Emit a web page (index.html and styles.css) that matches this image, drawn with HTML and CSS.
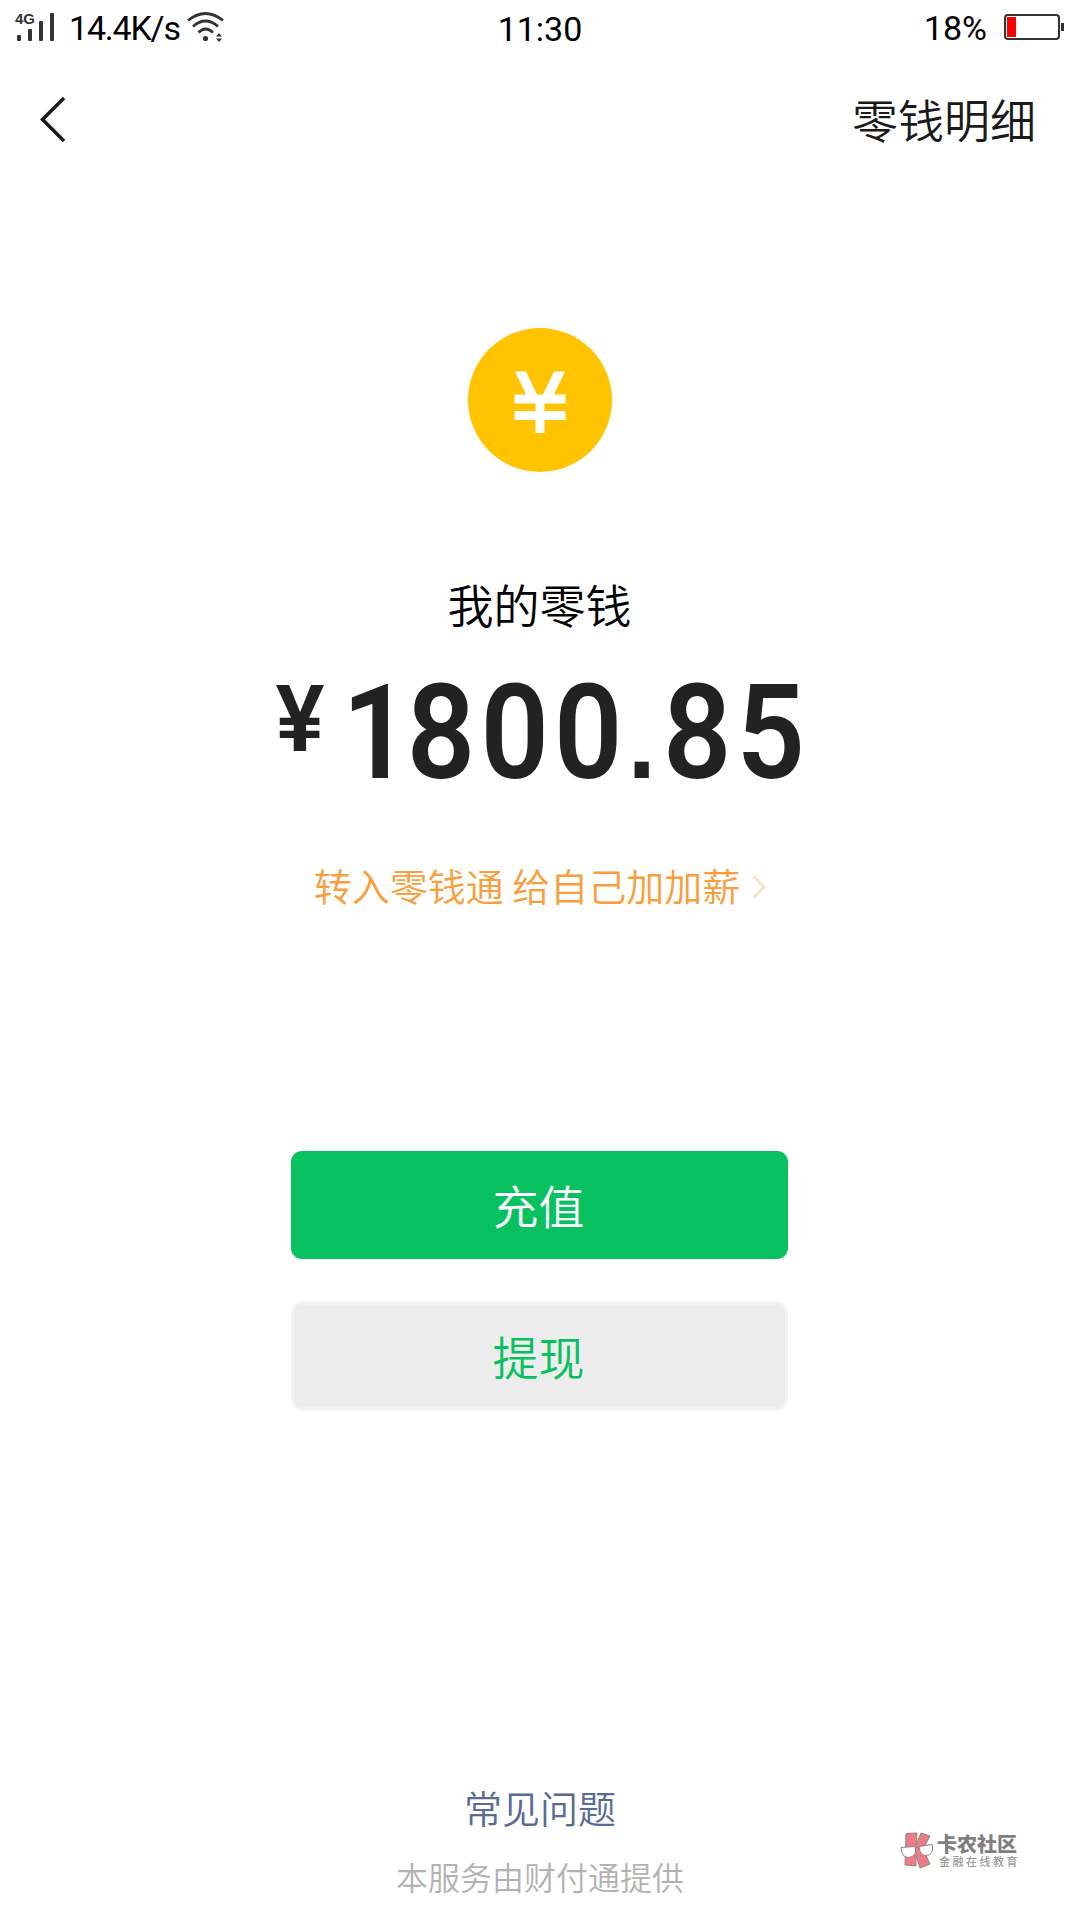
FILE: index.html
```html
<!DOCTYPE html>
<html lang="zh-CN">
<head>
    <meta charset="UTF-8">
    <meta name="viewport" content="width=device-width, initial-scale=1.0">
    <title>我的零钱</title>
    <link rel="stylesheet" href="styles.css">
</head>
<body>
    <div class="status">
        <div class="status-left">
            <div class="signal">
                <span class="network">4G</span>
                <svg width="40" height="29" viewBox="0 0 40 29" fill="#333">
                    <rect x="2" y="22" width="4" height="6" rx="1"/>
                    <rect x="13" y="16" width="4" height="12" rx="1"/>
                    <rect x="24" y="8" width="4" height="20" rx="1"/>
                    <rect x="35" y="0" width="4" height="28" rx="1"/>
                </svg>
            </div>
            <span class="speed">14.4K/s</span>
            <svg class="wifi" width="38" height="30" viewBox="0 0 38 30" fill="none" stroke="#333" stroke-width="2.8">
                <path d="M1 8.500Q18.500 -5.500 36 8.500"/>
                <path d="M6 14.500Q18.500 3.500 31 14.500"/>
                <path d="M11.500 20.500Q18.500 13.500 26 20.500"/>
                <circle cx="18.500" cy="26.500" r="2.600" fill="#333" stroke="none"/>
                <path d="M29 24.500l3-3.500 3 3.500zM29 26.500h6l-3 3.500z" fill="#333" stroke="none"/>
            </svg>
        </div>
        <span class="time">11:30</span>
        <div class="status-right">
            <span class="percent">18%</span>
            <div class="battery"><div class="battery-level"></div></div>
            <div class="battery-cap"></div>
        </div>
    </div>
    <div class="nav">
        <svg class="back" width="26" height="48" viewBox="0 0 26 48" fill="none" stroke="#1a1a1a" stroke-width="3.600">
            <path d="M24 2L2.500 23.500L24 45"/>
        </svg>
        <span class="detail">零钱明细</span>
    </div>
    <div class="main">
        <svg class="coin" width="144" height="144" viewBox="0 0 144 144">
            <circle cx="72" cy="72" r="72" fill="#ffc300"/>
            <path d="M47 43.500H58L69 66.500H75L86 43.500H97L86 66.500H97.500V75.500H76.500V83H97.500V92H76.500V105H67.500V92H46.500V83H67.500V75.500H46.500V66.500H58Z" fill="#fff"/>
        </svg>
        <div class="label">我的零钱</div>
        <div class="amount">
            <span class="yen">¥</span>
            <span class="number"><span class="first">1</span>800<span class="point">.</span>85</span>
        </div>
        <div class="promo">
            <span>转入零钱通 给自己加加薪</span>
            <svg width="14" height="24" viewBox="0 0 14 24" fill="none" stroke="#fddcba" stroke-width="2.400">
                <path d="M1.500 1.500L12 12L1.500 22.500"/>
            </svg>
        </div>
        <button class="btn recharge">充值</button>
        <button class="btn withdraw">提现</button>
    </div>
    <div class="footer">
        <div class="faq">常见问题</div>
        <div class="service">本服务由财付通提供</div>
    </div>
    <div class="watermark">
        <svg width="34" height="37" viewBox="0 0 34 37" stroke="#8d8686" stroke-width="1">
            <path d="M6 1.500L17 1L16 13L21 1L30 4L23 17L30 32L20 36L16 23L16 34L5 33Z" fill="#ee7c84"/>
            <path d="M1 15.500L15 14.500Q17 22 12 24.500Q7 27 3 23Q1 20 1 15.500ZM19 14.500L32 12.500Q34 20 29 23Q24 25 21 21Q19 18 19 14.500Z" fill="#fff"/>
            <path d="M15 16Q17 14 19 16" fill="none"/>
        </svg>
        <div class="watermark-text">
            <div class="watermark-name">卡农社区</div>
            <div class="watermark-sub">金融在线教育</div>
        </div>
    </div>
</body>
</html>
```
FILE: styles.css
```css
body{
    width: 1080px;
    height: 1920px;
    margin: 0;
    display: flex;
    flex-direction: column;
    position: relative;
    overflow: hidden;
    background-color: #fff;
    font-family: "Noto Sans CJK SC", sans-serif;
    font-weight: 350;
    color: #1a1a1a;
}
svg{
    display: block;
}
.status{
    height: 56px;
    display: grid;
    grid-template-columns: 1fr auto 1fr;
    font-family: Roboto, sans-serif;
    font-size: 34px;
    font-weight: 370;
    line-height: 56px;
    color: #000;
}
.status-left,
.status-right{
    display: flex;
}
.status-right{
    justify-content: flex-end;
    padding-right: 16px;
}
.signal{
    position: relative;
    padding: 13px 0 0 15px;
}
.network{
    position: absolute;
    left: 15px;
    top: 11px;
    font-family: "Liberation Sans", sans-serif;
    font-size: 15px;
    font-weight: bold;
    line-height: 16px;
    color: #333;
}
.speed{
    width: 111px;
    margin-left: 14px;
    letter-spacing: -1.2px;
}
.wifi{
    margin: 12px 0 0 7px;
}
.time{
    padding-top: 1px;
}
.percent{
    margin-right: 17px;
}
.battery{
    box-sizing: border-box;
    width: 56px;
    height: 26px;
    margin-top: 14px;
    padding: 1px;
    border: 2px solid #333;
    border-radius: 4px;
}
.battery-level{
    width: 9px;
    height: 20px;
    background-color: #f00;
}
.battery-cap{
    width: 3px;
    height: 8px;
    margin: 23px 0 0 1px;
    background-color: #333;
}
.nav{
    height: 128px;
    display: flex;
    justify-content: space-between;
    align-items: center;
    padding: 0 44px 0 40px;
}
.detail{
    margin-top: -4px;
    font-size: 46px;
    line-height: 60px;
}
.main{
    display: flex;
    flex-direction: column;
    align-items: center;
    padding-right: 1px;
}
.coin{
    margin-top: 144px;
}
.label{
    margin-top: 101px;
    font-size: 46px;
    line-height: 60px;
    color: #000;
}
.amount{
    width: 530px;
    height: 140px;
    margin-top: 30px;
    display: flex;
    font-family: Roboto, sans-serif;
    font-weight: 600;
    color: #222;
}
.yen{
    width: 66px;
    flex-shrink: 0;
    padding-left: 1px;
    font-size: 92px;
    line-height: 114px;
}
.number{
    font-size: 131px;
    line-height: 140px;
    letter-spacing: 5.6px;
    transform: scaleX(0.915);
    transform-origin: left;
}
.first{
    letter-spacing: -4px;
}
.point{
    font-family: "Liberation Sans", sans-serif;
    font-size: 110px;
    line-height: 1;
    letter-spacing: 8px;
}
.promo{
    display: flex;
    align-items: center;
    gap: 12px;
    margin-top: 57px;
    padding-left: 1px;
    font-size: 38px;
    line-height: 50px;
    color: #fa9d3b;
}
.promo svg{
    margin-top: 3px;
}
.btn{
    box-sizing: border-box;
    width: 497px;
    height: 108px;
    padding: 0 2px 2px 0;
    border: none;
    border-radius: 11px;
    font-family: inherit;
    font-size: 46px;
    font-weight: inherit;
}
.recharge{
    margin-top: 241px;
    background-color: #07c160;
    color: #fff;
}
.withdraw{
    margin-top: 43px;
    border: 3px solid #f2f2f2;
    background-color: #ededed;
    color: #07c160;
}
.footer{
    margin-top: auto;
    padding-bottom: 22px;
    text-align: center;
}
.faq{
    font-size: 38px;
    line-height: 50px;
    color: #576b95;
}
.service{
    margin-top: 22px;
    font-size: 32px;
    line-height: 44px;
    color: #b2b2b2;
}
/* stamp lying over the page corner */
.watermark{
    position: absolute;
    left: 900px;
    top: 1832px;
    display: flex;
    gap: 3px;
}
.watermark-name{
    font-size: 20px;
    font-weight: 900;
    line-height: 23px;
    color: #7f7f7f;
}
.watermark-sub{
    padding-left: 2px;
    font-size: 11px;
    font-weight: 500;
    line-height: 12px;
    letter-spacing: 2.5px;
    color: #999;
}
```
